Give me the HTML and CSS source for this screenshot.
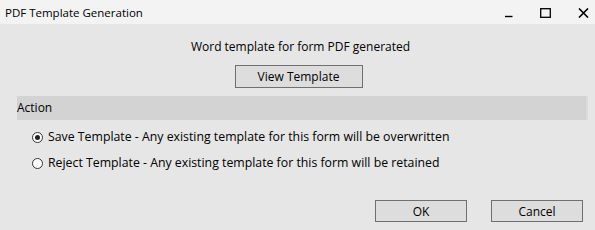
FILE: index.html
```html
<!DOCTYPE html>
<html lang="en">
<head>
  <meta charset="UTF-8">
  <title>PDF Template Generation</title>
  <link rel="stylesheet" href="styles.css">
</head>
<body>
<div class="window">
  <!-- Title bar -->
  <div class="titlebar">
    <span class="title">PDF Template Generation</span>
    <div class="controls">
      <span class="ctrl">
        <svg width="8" height="10" viewBox="0 0 8 10"><path d="M0 8.5 H7.5" stroke="#000" stroke-width="1.4"/></svg>
      </span>
      <span class="ctrl">
        <svg width="11" height="10" viewBox="0 0 11 10"><rect x="0.7" y="0.7" width="9.6" height="8.6" fill="none" stroke="#000" stroke-width="1.3"/></svg>
      </span>
      <span class="ctrl">
        <svg width="11" height="10" viewBox="0 0 11 10"><path d="M1 0.5 L10 9.5 M10 0.5 L1 9.5" stroke="#000" stroke-width="1.6"/></svg>
      </span>
    </div>
  </div>

  <!-- Dialog body -->
  <div class="content">
    <div class="message">Word template for form PDF generated</div>
    <button class="btn view-btn">View Template</button>

    <div class="section-header">Action</div>
    <div class="options">
      <label class="option">
        <input type="radio" name="action" checked>
        <span class="radio"></span>
        Save Template - Any existing template for this form will be overwritten
      </label>
      <label class="option">
        <input type="radio" name="action">
        <span class="radio"></span>
        Reject Template - Any existing template for this form will be retained
      </label>
    </div>

    <div class="footer">
      <button class="btn">OK</button>
      <button class="btn">Cancel</button>
    </div>
  </div>
</div>
</body>
</html>
```

FILE: styles.css
```css
* { margin: 0; padding: 0; box-sizing: border-box; font-family: 'Open Sans', 'Noto Sans', sans-serif; }
body { background: #e6e6e6; color: #000; overflow: hidden; }

.window {
  width: 595px;
  height: 230px;
  display: flex;
  flex-direction: column;
}

/* Title Bar */
.titlebar {
  height: 24px;
  background: #f3f3f3;
  display: flex;
  align-items: center;
  justify-content: space-between;
  padding-left: 5px;
}
.title {
  font-size: 11.5px;
  color: #000;
}
.controls {
  display: flex;
  align-items: center;
  gap: 27px;
  height: 100%;
  padding-right: 6px;
}
.ctrl {
  display: flex;
  align-items: center;
  margin-top: 1px;
}

/* Content */
.content {
  flex: 1;
  background: #e6e6e6;
  display: flex;
  flex-direction: column;
  align-items: center;
  font-size: 12px;
}
.message {
  margin-top: 15px;
  line-height: 16px;
  margin-left: 6px;
}
.btn {
  background: #dddddd;
  border: 1px solid #707070;
  font-size: 12px;
  color: #000;
  height: 22px;
  width: 92px;
  cursor: pointer;
}
.view-btn {
  margin-top: 10px;
  width: 128px;
  height: 23px;
  margin-left: 2px;
}

.section-header {
  align-self: stretch;
  margin: 8px 7px 0 17px;
  height: 24px;
  background: #d3d3d3;
  border-right: 2px solid #dcdcdc;
  line-height: 23px;
}
.options {
  align-self: stretch;
  padding-left: 32px;
  padding-top: 4px;
  font-size: 12.3px;
}
.option {
  display: flex;
  align-items: center;
  height: 26px;
  line-height: 26px;
}
.option input { display: none; }
.radio {
  width: 11px;
  height: 11px;
  border: 1px solid #333;
  border-radius: 50%;
  background: #fff;
  margin-right: 5px;
  display: flex;
  justify-content: center;
  align-items: center;
}
.option input:checked + .radio::after {
  content: '';
  width: 5px;
  height: 5px;
  border-radius: 50%;
  background: #212121;
}

.footer {
  align-self: stretch;
  display: flex;
  justify-content: flex-end;
  gap: 24px;
  padding-right: 12px;
  margin-top: 24px;
}
```
